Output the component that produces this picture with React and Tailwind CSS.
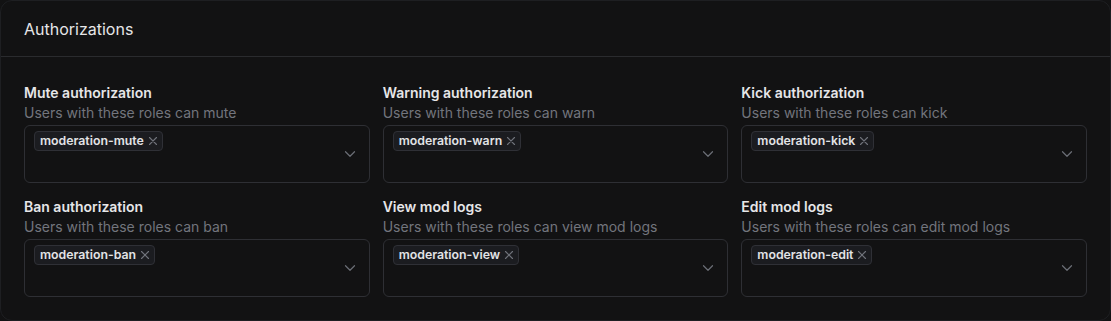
import React from "react";

const items = [
  { title: "Mute authorization", desc: "Users with these roles can mute", chip: "moderation-mute" },
  { title: "Warning authorization", desc: "Users with these roles can warn", chip: "moderation-warn" },
  { title: "Kick authorization", desc: "Users with these roles can kick", chip: "moderation-kick" },
  { title: "Ban authorization", desc: "Users with these roles can ban", chip: "moderation-ban" },
  { title: "View mod logs", desc: "Users with these roles can view mod logs", chip: "moderation-view" },
  { title: "Edit mod logs", desc: "Users with these roles can edit mod logs", chip: "moderation-edit" },
];

function Chevron() {
  return (
    <svg width="12" height="12" viewBox="0 0 12 12" fill="none" className="text-[#6b6e76]">
      <path d="M1.5 3.75 L6 8.25 L10.5 3.75" stroke="currentColor" strokeWidth="1.2" strokeLinecap="round" strokeLinejoin="round" />
    </svg>
  );
}

function XIcon() {
  return (
    <svg width="10" height="10" viewBox="0 0 10 10" fill="none" className="text-[#70737b]">
      <path d="M1.5 1.5 L8.5 8.5 M8.5 1.5 L1.5 8.5" stroke="currentColor" strokeWidth="1.1" strokeLinecap="round" />
    </svg>
  );
}

function Field({ title, desc, chip }) {
  return (
    <div className="flex flex-col">
      <div className="text-[14px] leading-5 font-semibold text-[#e6e6e8]">{title}</div>
      <div className="text-[14px] leading-5 text-[#72757d]">{desc}</div>
      <div className="mt-[2px] h-[58px] rounded-md border border-[#2e2f34] flex items-start justify-between pl-[9px] pr-[13px] pt-[5px]">
        <div className="flex items-center gap-[4px] h-[20px] rounded-[4px] border border-[#2f3036] bg-[#1b1c20] pl-[5px] pr-[4px]">
          <span className="text-[12.3px] font-semibold leading-none text-[#e2e3e6]">{chip}</span>
          <XIcon />
        </div>
        <div className="self-center mt-[-6px]">
          <Chevron />
        </div>
      </div>
    </div>
  );
}

export default function App() {
  return (
    <div
      className="w-[1111px] h-[321px] bg-[#121213] overflow-hidden"
      style={{ fontFamily: "Inter, 'Noto Sans', sans-serif" }}
    >
      <div className="h-full rounded-xl border border-[#1e1f22] bg-[#121213]">
        <div className="h-[56px] border-b border-[#2a2b2e] flex items-center px-[23px]">
          <h2 className="text-[16px] text-[#e6e6e8] font-normal">Authorizations</h2>
        </div>
        <div className="px-[23px] pt-[26px] grid grid-cols-3 gap-x-[13px] gap-y-[14px]">
          {items.map((it) => (
            <Field key={it.title} {...it} />
          ))}
        </div>
      </div>
    </div>
  );
}
